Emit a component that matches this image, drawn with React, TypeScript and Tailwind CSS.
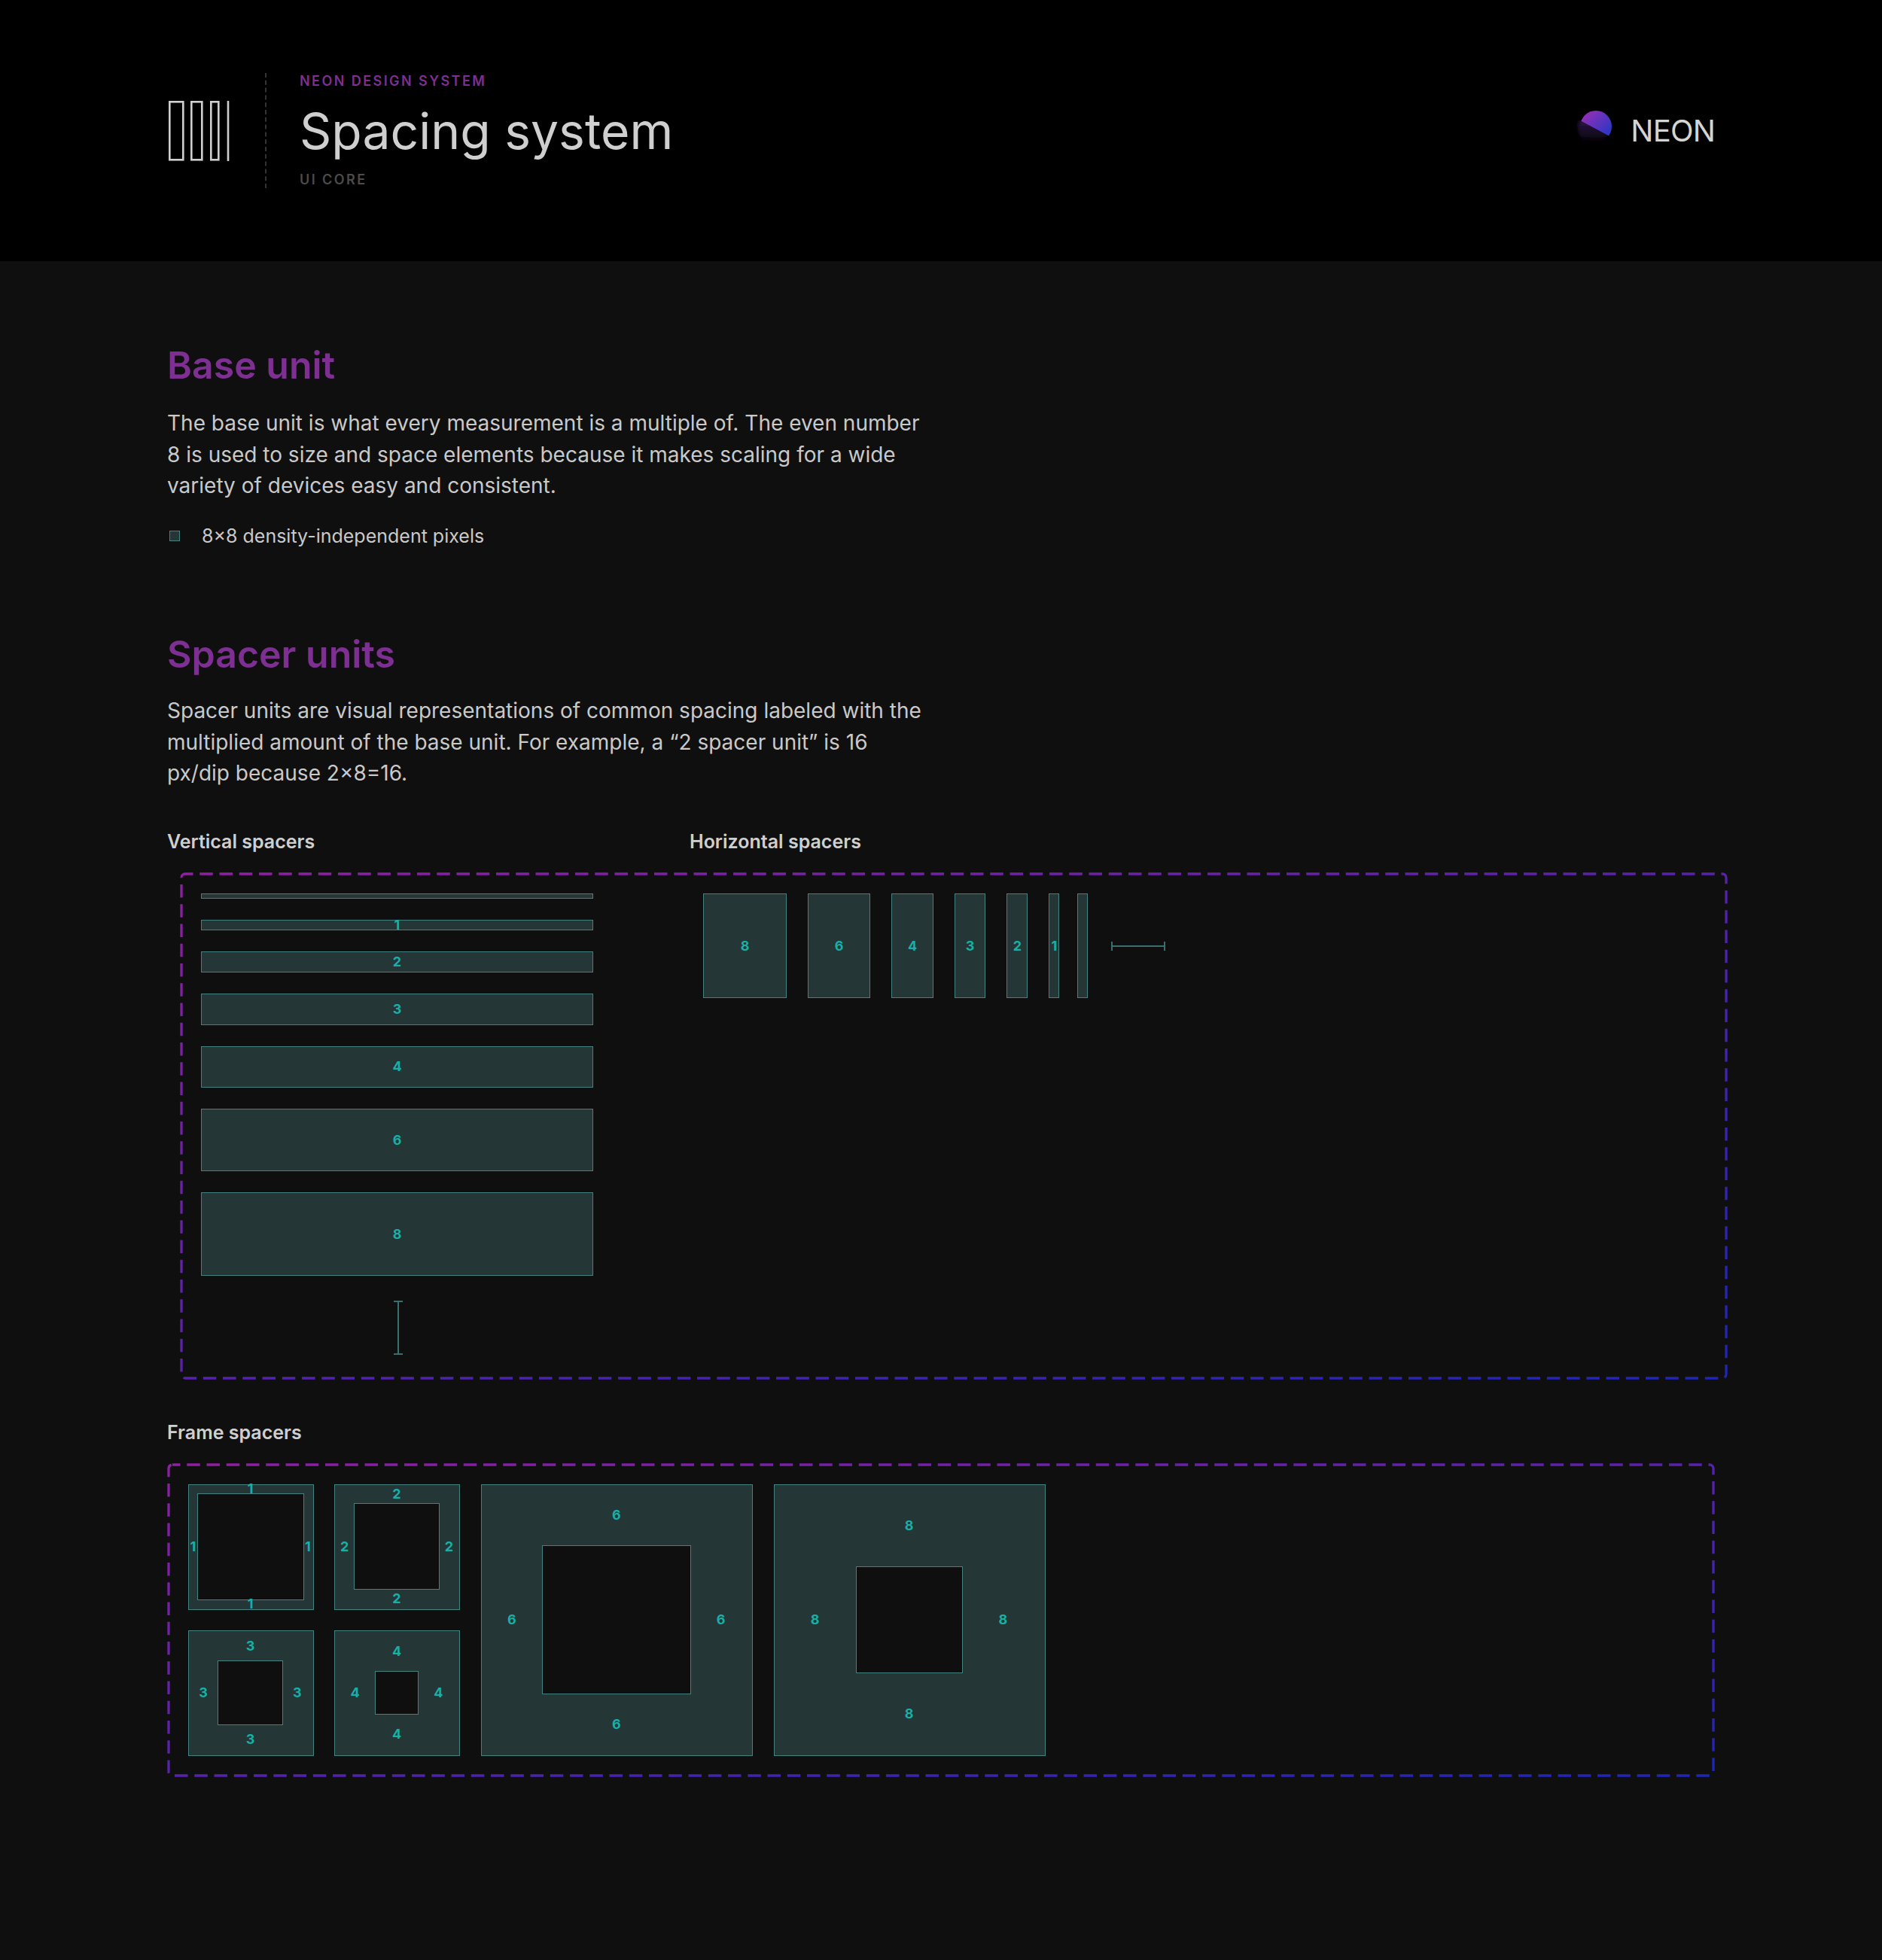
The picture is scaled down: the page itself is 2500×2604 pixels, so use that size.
import React from "react";

const verticalBars = [
  { label: "", size: "h-[7px]" },
  { label: "1", size: "h-[14px]" },
  { label: "2", size: "h-[28px]" },
  { label: "3", size: "h-[41.6px]" },
  { label: "4", size: "h-[55.5px]" },
  { label: "6", size: "h-[83.3px]" },
  { label: "8", size: "h-[111px]" },
];

const horizontalBars = [
  { label: "8", size: "w-[111px]" },
  { label: "6", size: "w-[83.3px]" },
  { label: "4", size: "w-[55.5px]" },
  { label: "3", size: "w-[41.6px]" },
  { label: "2", size: "w-[28px]" },
  { label: "1", size: "w-[14px]" },
];

const cellBase = "flex items-center justify-center text-[18px] leading-none font-bold text-[#17b0a7]";

const Frame = ({ n, grid, box }: { n: string; grid: string; box: string }) => (
  <div className={`grid shrink-0 border-[1.67px] border-[#43827f] bg-[#243635] ${grid} ${box}`}>
    <span />
    <span className={`${cellBase} min-h-0`}>{n}</span>
    <span />
    <span className={`${cellBase} min-w-0`}>{n}</span>
    <div className="border-[1.67px] border-[#43827f] bg-[#0f0f0f]" />
    <span className={`${cellBase} min-w-0`}>{n}</span>
    <span />
    <span className={`${cellBase} min-h-0`}>{n}</span>
    <span />
  </div>
);

const DashedBox = ({ id, w, h }: { id: string; w: number; h: number }) => (
  <svg className="absolute top-0 left-0 overflow-visible" width={w} height={h} fill="none">
    <defs>
      <linearGradient id={id} x1="0" y1="0" x2="1" y2="1">
        <stop offset="0" stopColor="#8f1fa3" />
        <stop offset="1" stopColor="#1f25b5" />
      </linearGradient>
    </defs>
    <rect
      width={w}
      height={h}
      rx="5"
      stroke={`url(#${id})`}
      strokeWidth="3.3"
      strokeDasharray="17.5 8.75"
      strokeDashoffset="7"
    />
  </svg>
);

const Logo = () => (
  <svg width="60" height="70" viewBox="0 0 60 70" className="shrink-0">
    <defs>
      <linearGradient id="logo-top" x1="0" y1="0" x2="1" y2="1">
        <stop offset="0" stopColor="#a22fb4" />
        <stop offset="1" stopColor="#1238c8" />
      </linearGradient>
      <linearGradient id="logo-low" x1="0" y1="0" x2="0" y2="1">
        <stop offset="0" stopColor="#3d1f63" />
        <stop offset="1" stopColor="#000000" />
      </linearGradient>
      <clipPath id="logo-clip">
        <path d="M0 16 L60 48 L60 70 L0 70 Z" />
      </clipPath>
      <clipPath id="logo-clip-top">
        <path d="M0 0 L60 0 L60 48 L0 16 Z" />
      </clipPath>
      <filter id="logo-blur" x="-30%" y="-30%" width="160%" height="160%">
        <feGaussianBlur stdDeviation="2.5" />
      </filter>
    </defs>
    <circle cx="31" cy="29" r="21" fill="url(#logo-top)" clipPath="url(#logo-clip-top)" />
    <g clipPath="url(#logo-clip)">
      <circle cx="28" cy="31" r="21" fill="url(#logo-low)" filter="url(#logo-blur)" />
    </g>
  </svg>
);

export default function App() {
  return (
    <div className="min-h-[2604px] w-[2500px] bg-[#0f0f0f] font-['Inter',sans-serif] text-[#c9c9c9]">
      <header className="flex h-[347px] items-center bg-black pr-[222px] pl-[224px]">
        <svg width="82" height="80" viewBox="0 0 82 80" fill="none" stroke="#cfcfcf" strokeWidth="2.6" className="shrink-0">
          <rect x="1.3" y="1.3" width="18" height="77" />
          <rect x="30.3" y="1.3" width="14" height="77" />
          <rect x="56.3" y="1.3" width="10" height="77" />
          <path d="M79 0V80" />
        </svg>
        <div className="ml-[46px] h-[153px] border-l-2 border-dashed border-[#333333]" />
        <div className="ml-[44px] flex h-[153px] flex-col justify-between">
          <div className="text-[18px] leading-[22px] font-semibold tracking-[0.135em] text-[#7d2f92]">NEON DESIGN SYSTEM</div>
          <h1 className="text-[66px] leading-[76px] font-normal text-[#cfcfcf]">Spacing system</h1>
          <div className="text-[18px] leading-[22px] font-semibold tracking-[0.135em] text-[#4b4b4b]">UI CORE</div>
        </div>
        <div className="ml-auto flex items-center gap-[17px]">
          <Logo />
          <span className="text-[40px] leading-none font-normal tracking-[-0.02em] text-[#d4d4d4]">NEON</span>
        </div>
      </header>

      <main className="px-[222px] pt-[108px]">
        <h2 className="text-[50px] leading-[60px] font-semibold text-[#7d2f92]">Base unit</h2>
        <p className="mt-[27px] w-[1015px] text-[28px] leading-[41.67px]">
          The base unit is what every measurement is a multiple of. The even number 8 is used to size and space elements because it makes scaling for a wide variety of devices easy and consistent.
        </p>
        <div className="mt-[25px] flex items-center text-[25px] leading-[40px]">
          <span className="ml-[3px] size-[14px] border-[1.67px] border-[#43827f] bg-[#243635]" />
          <span className="ml-[29px]">8×8 density-independent pixels</span>
        </div>

        <h2 className="mt-[107px] text-[50px] leading-[60px] font-semibold text-[#7d2f92]">Spacer units</h2>
        <p className="mt-[25px] w-[1015px] text-[28px] leading-[41.67px]">
          Spacer units are visual representations of common spacing labeled with the multiplied amount of the base unit. For example, a “2 spacer unit” is 16 px/dip because 2×8=16.
        </p>

        <div className="mt-[51px] flex text-[25px] leading-[36px] font-semibold text-[#cfcfcf]">
          <div className="w-[694px]">Vertical spacers</div>
          <div>Horizontal spacers</div>
        </div>

        <div className="relative mt-[25px] ml-[19px] flex h-[670px] w-[2052px] p-[26px]">
          <DashedBox id="dash-spacers" w={2052} h={670} />
          <div className="flex w-[521px] flex-col items-center gap-[28px]">
            {verticalBars.map((bar) => (
              <div key={bar.label} className={`flex w-full items-center justify-center border-[1.67px] border-[#43827f] bg-[#243635] text-[18px] leading-none font-bold text-[#17b0a7] ${bar.size}`}>
                {bar.label}
              </div>
            ))}
            <svg width="12" height="72" viewBox="0 0 12 72" fill="none" stroke="#3a6f6d" strokeWidth="2" className="mt-[5px] ml-[2px]">
              <path d="M0 1H12M6 1V71M0 71H12" />
            </svg>
          </div>
          <div className="ml-[146px] flex h-[139px] items-center">
            <div className="flex h-full gap-[28px]">
              {horizontalBars.map((bar) => (
                <div key={bar.label} className={`flex h-full items-center justify-center border-[1.67px] border-[#43827f] bg-[#243635] text-[18px] leading-none font-bold text-[#17b0a7] ${bar.size}`}>
                  {bar.label}
                </div>
              ))}
            </div>
            <div className="ml-[24px] h-full w-[14px] border-[1.67px] border-[#43827f] bg-[#243635]" />
            <svg width="72" height="12" viewBox="0 0 72 12" fill="none" stroke="#3a6f6d" strokeWidth="2" className="ml-[31px]">
              <path d="M1 0V12M1 6H71M71 0V12" />
            </svg>
          </div>
        </div>

        <div className="mt-[54px] text-[25px] leading-[36px] font-semibold text-[#cfcfcf]">Frame spacers</div>

        <div className="relative mt-[25px] ml-[2px] flex h-[413px] w-[2052px] gap-[27.8px] p-[26px]">
          <DashedBox id="dash-frames" w={2052} h={413} />
          <div className="grid grid-cols-[166.67px_166.67px] gap-[27.8px]">
            <Frame n="1" box="size-[166.67px]" grid="grid-cols-[10.56px_142px_10.56px] grid-rows-[10.56px_142px_10.56px]" />
            <Frame n="2" box="size-[166.67px]" grid="grid-cols-[24.45px_114.2px_24.45px] grid-rows-[24.45px_114.2px_24.45px]" />
            <Frame n="3" box="size-[166.67px]" grid="grid-cols-[38.34px_86.4px_38.34px] grid-rows-[38.34px_86.4px_38.34px]" />
            <Frame n="4" box="size-[166.67px]" grid="grid-cols-[52.2px_58.7px_52.2px] grid-rows-[52.2px_58.7px_52.2px]" />
          </div>
          <Frame n="6" box="size-[361px]" grid="grid-cols-[80px_197.7px_80px] grid-rows-[80px_197.7px_80px]" />
          <Frame n="8" box="size-[361px]" grid="grid-cols-[107.8px_142px_107.8px] grid-rows-[107.8px_142px_107.8px]" />
        </div>
      </main>
    </div>
  );
}
